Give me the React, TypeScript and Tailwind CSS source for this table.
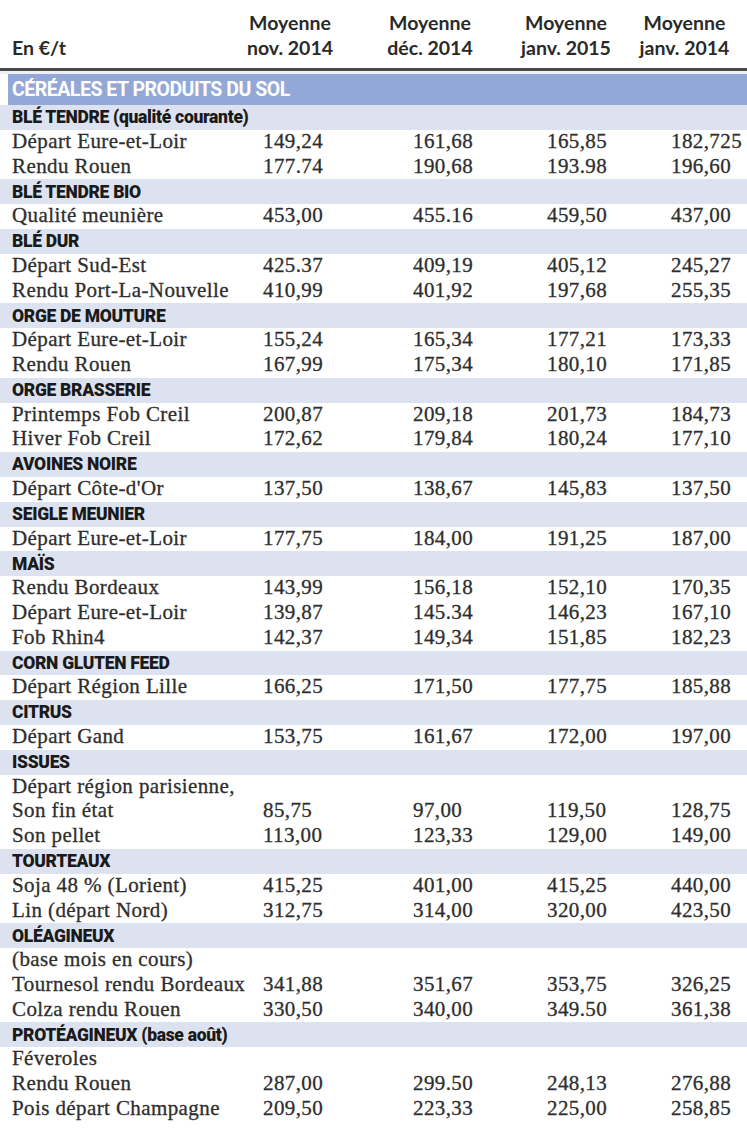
import React from "react";

type Row =
  | { kind: "cat"; label: string; sub?: string }
  | { kind: "data"; label: string; v?: [string, string, string, string] };

const rows: Row[] = [
  { kind: "cat", label: "BLÉ TENDRE", sub: "(qualité courante)" },
  { kind: "data", label: "Départ Eure-et-Loir", v: ["149,24", "161,68", "165,85", "182,725"] },
  { kind: "data", label: "Rendu Rouen", v: ["177.74", "190,68", "193.98", "196,60"] },
  { kind: "cat", label: "BLÉ TENDRE BIO" },
  { kind: "data", label: "Qualité meunière", v: ["453,00", "455.16", "459,50", "437,00"] },
  { kind: "cat", label: "BLÉ DUR" },
  { kind: "data", label: "Départ Sud-Est", v: ["425.37", "409,19", "405,12", "245,27"] },
  { kind: "data", label: "Rendu Port-La-Nouvelle", v: ["410,99", "401,92", "197,68", "255,35"] },
  { kind: "cat", label: "ORGE DE MOUTURE" },
  { kind: "data", label: "Départ Eure-et-Loir", v: ["155,24", "165,34", "177,21", "173,33"] },
  { kind: "data", label: "Rendu Rouen", v: ["167,99", "175,34", "180,10", "171,85"] },
  { kind: "cat", label: "ORGE BRASSERIE" },
  { kind: "data", label: "Printemps Fob Creil", v: ["200,87", "209,18", "201,73", "184,73"] },
  { kind: "data", label: "Hiver Fob Creil", v: ["172,62", "179,84", "180,24", "177,10"] },
  { kind: "cat", label: "AVOINES NOIRE" },
  { kind: "data", label: "Départ Côte-d'Or", v: ["137,50", "138,67", "145,83", "137,50"] },
  { kind: "cat", label: "SEIGLE MEUNIER" },
  { kind: "data", label: "Départ Eure-et-Loir", v: ["177,75", "184,00", "191,25", "187,00"] },
  { kind: "cat", label: "MAÏS" },
  { kind: "data", label: "Rendu Bordeaux", v: ["143,99", "156,18", "152,10", "170,35"] },
  { kind: "data", label: "Départ Eure-et-Loir", v: ["139,87", "145.34", "146,23", "167,10"] },
  { kind: "data", label: "Fob Rhin4", v: ["142,37", "149,34", "151,85", "182,23"] },
  { kind: "cat", label: "CORN GLUTEN FEED" },
  { kind: "data", label: "Départ Région Lille", v: ["166,25", "171,50", "177,75", "185,88"] },
  { kind: "cat", label: "CITRUS" },
  { kind: "data", label: "Départ Gand", v: ["153,75", "161,67", "172,00", "197,00"] },
  { kind: "cat", label: "ISSUES" },
  { kind: "data", label: "Départ région parisienne," },
  { kind: "data", label: "Son fin état", v: ["85,75", "97,00", "119,50", "128,75"] },
  { kind: "data", label: "Son pellet", v: ["113,00", "123,33", "129,00", "149,00"] },
  { kind: "cat", label: "TOURTEAUX" },
  { kind: "data", label: "Soja 48 % (Lorient)", v: ["415,25", "401,00", "415,25", "440,00"] },
  { kind: "data", label: "Lin (départ Nord)", v: ["312,75", "314,00", "320,00", "423,50"] },
  { kind: "cat", label: "OLÉAGINEUX" },
  { kind: "data", label: "(base mois en cours)" },
  { kind: "data", label: "Tournesol rendu Bordeaux", v: ["341,88", "351,67", "353,75", "326,25"] },
  { kind: "data", label: "Colza rendu Rouen", v: ["330,50", "340,00", "349.50", "361,38"] },
  { kind: "cat", label: "PROTÉAGINEUX", sub: "(base août)" },
  { kind: "data", label: "Féveroles" },
  { kind: "data", label: "Rendu Rouen", v: ["287,00", "299.50", "248,13", "276,88"] },
  { kind: "data", label: "Pois départ Champagne", v: ["209,50", "223,33", "225,00", "258,85"] },
];

const headFont = { fontFamily: "Lato, 'Open Sans', 'Liberation Sans', sans-serif" };
const catFont = { fontFamily: "Roboto, 'Liberation Sans', sans-serif" };
const serif = { fontFamily: "'Liberation Serif', 'DejaVu Serif', serif" };

export default function App() {
  return (
    <div className="w-[747px] h-[1128px] bg-white overflow-hidden">
      {/* header */}
      <div
        className="h-[68px] grid grid-cols-[220px_140px_140px_132px_1fr] items-end pb-[8px] text-[#2a2a2a] font-bold text-[19.5px] leading-[25px]"
        style={headFont}
      >
        <div className="pl-[12px]">En €/t</div>
        <div className="text-center">Moyenne<br />nov. 2014</div>
        <div className="text-center">Moyenne<br />déc. 2014</div>
        <div className="text-center">Moyenne<br />janv. 2015</div>
        <div className="text-center pr-[10px]">Moyenne<br />janv. 2014</div>
      </div>
      <div className="h-[3px] bg-[#4a4a4a]" />
      <div className="h-[3px] bg-[#eef0f7]" />
      <div
        className="h-[31px] ml-[8px] bg-[#93a8d6] flex items-center pl-[4px] text-white font-bold text-[19.5px] tracking-tight"
        style={catFont}
      >
        CÉRÉALES ET PRODUITS DU SOL
      </div>
      {rows.map((r, i) =>
        r.kind === "cat" ? (
          <div
            key={i}
            className="h-[24.8px] bg-[#dde2f0] flex items-center pl-[12px] text-[#1a1a1a] font-black text-[17.5px] tracking-[-0.3px]"
            style={catFont}
          >
            <span>{r.label}</span>
            {r.sub && <span className="ml-[4px]">{r.sub}</span>}
          </div>
        ) : (
          <div
            key={i}
            className="h-[24.8px] grid grid-cols-[263px_150px_134px_124px_1fr] items-start content-start leading-[22px] text-[#2e2e2e] text-[21px] tracking-[0.4px] whitespace-nowrap [-webkit-text-stroke:0.3px_#2e2e2e]"
            style={serif}
          >
            <div className="pl-[12px]">{r.label}</div>
            <div>{r.v?.[0]}</div>
            <div>{r.v?.[1]}</div>
            <div>{r.v?.[2]}</div>
            <div>{r.v?.[3]}</div>
          </div>
        )
      )}
    </div>
  );
}
